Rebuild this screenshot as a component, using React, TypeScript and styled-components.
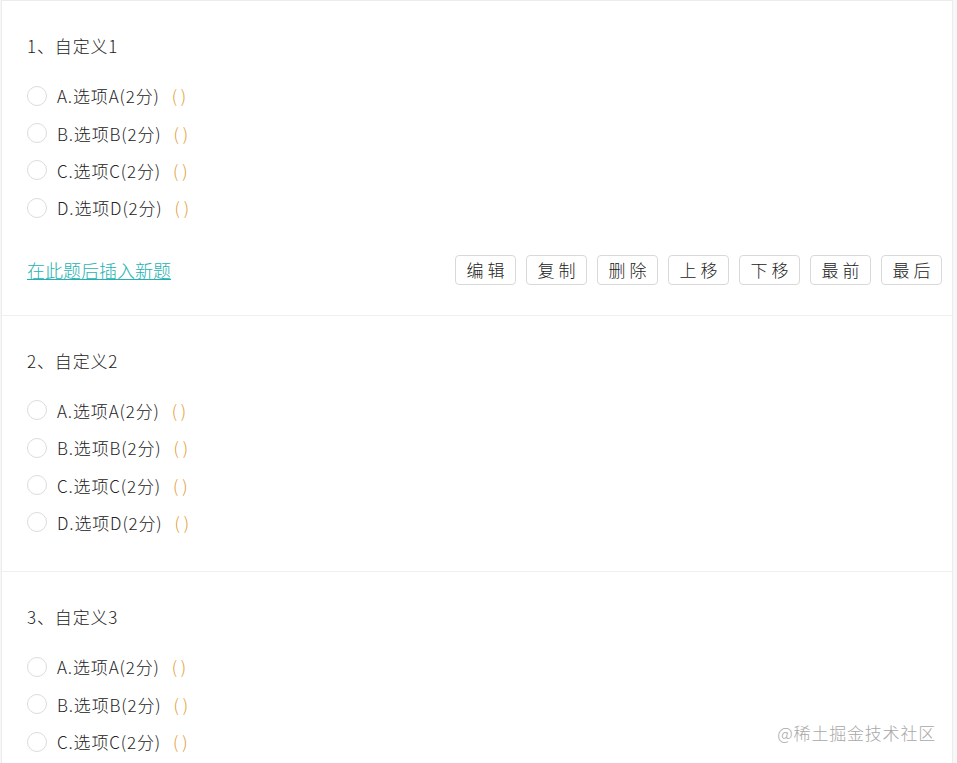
import styled, { createGlobalStyle } from 'styled-components';

const GlobalStyle = createGlobalStyle`
  html, body {
    margin: 0;
    padding: 0;
    background: #f6f7f8;
  }
  body {
    font-family: "Noto Sans CJK SC", "Noto Sans", sans-serif;
    color: #333;
  }
`;

type Question = {
  no: number;
  title: string;
  options: string[];
  actions?: boolean;
};

const questions: Question[] = [
  { no: 1, title: '自定义1', options: ['A', 'B', 'C', 'D'], actions: true },
  { no: 2, title: '自定义2', options: ['A', 'B', 'C', 'D'] },
  { no: 3, title: '自定义3', options: ['A', 'B', 'C'] },
];

const buttons = ['编辑', '复制', '删除', '上移', '下移', '最前', '最后'];

export default function App() {
  return (
    <>
      <GlobalStyle />
      <Page>
        <Panel>
          {questions.map((q) => (
            <Section key={q.no}>
              <Title>
                {q.no}、{q.title}
              </Title>
              <OptionList>
                {q.options.map((o) => (
                  <Option key={o}>
                    <Radio />
                    <OptionText>
                      {o}.选项{o}(2分)
                    </OptionText>
                    <Blank>( )</Blank>
                  </Option>
                ))}
              </OptionList>
              {q.actions && (
                <ActionBar>
                  <InsertLink href="#">在此题后插入新题</InsertLink>
                  <ButtonGroup>
                    {buttons.map((b) => (
                      <ActionButton key={b}>{b}</ActionButton>
                    ))}
                  </ButtonGroup>
                </ActionBar>
              )}
            </Section>
          ))}
        </Panel>
        <Watermark>@稀土掘金技术社区</Watermark>
      </Page>
    </>
  );
}

const Page = styled.div`
  height: 763px;
  padding-left: 1px;
  overflow: hidden;
`;

const Panel = styled.div`
  width: 950px;
  background: #fff;
  border: 1px solid #ececec;
  border-bottom: none;
`;

const Section = styled.div`
  padding: 33px 10px 30px 25px;
  border-bottom: 1px solid #efefef;
`;

const Title = styled.div`
  font-size: 17px;
  font-weight: 300;
  line-height: 24px;
  letter-spacing: 0.85px;
  color: #222;
`;

const OptionList = styled.div`
  margin-top: 19px;
`;

const Option = styled.div`
  display: flex;
  align-items: center;
  height: 37.4px;
`;

const Radio = styled.span`
  width: 18px;
  height: 18px;
  border: 1px solid #dcdcdc;
  border-radius: 50%;
  box-sizing: content-box;
  margin-right: 10px;
  background: #fff;
`;

const OptionText = styled.span`
  font-size: 17px;
  font-weight: 300;
  letter-spacing: 0.85px;
  color: #222;
`;

const Blank = styled.span`
  margin-left: 12px;
  font-size: 17px;
  font-weight: 300;
  color: #e39a2e;
`;

const ActionBar = styled.div`
  display: flex;
  align-items: center;
  justify-content: space-between;
  margin-top: 28px;
`;

const InsertLink = styled.a`
  font-size: 18px;
  font-weight: 300;
  color: #25b1b1;
  text-decoration: underline;
`;

const ButtonGroup = styled.div`
  display: flex;
  gap: 10px;
`;

const ActionButton = styled.button`
  width: 61px;
  height: 30px;
  padding: 0 0 0 4px;
  border: 1px solid #d9d9d9;
  border-radius: 4px;
  background: #fff;
  font-family: "Noto Sans CJK SC", sans-serif;
  font-size: 17px;
  font-weight: 300;
  letter-spacing: 4px;
  color: #222;
  cursor: pointer;
`;

const Watermark = styled.div`
  position: absolute;
  right: 21px;
  top: 720px;
  font-size: 17px;
  letter-spacing: 0.8px;
  color: #a8a8a8;
  font-weight: 300;
`;
